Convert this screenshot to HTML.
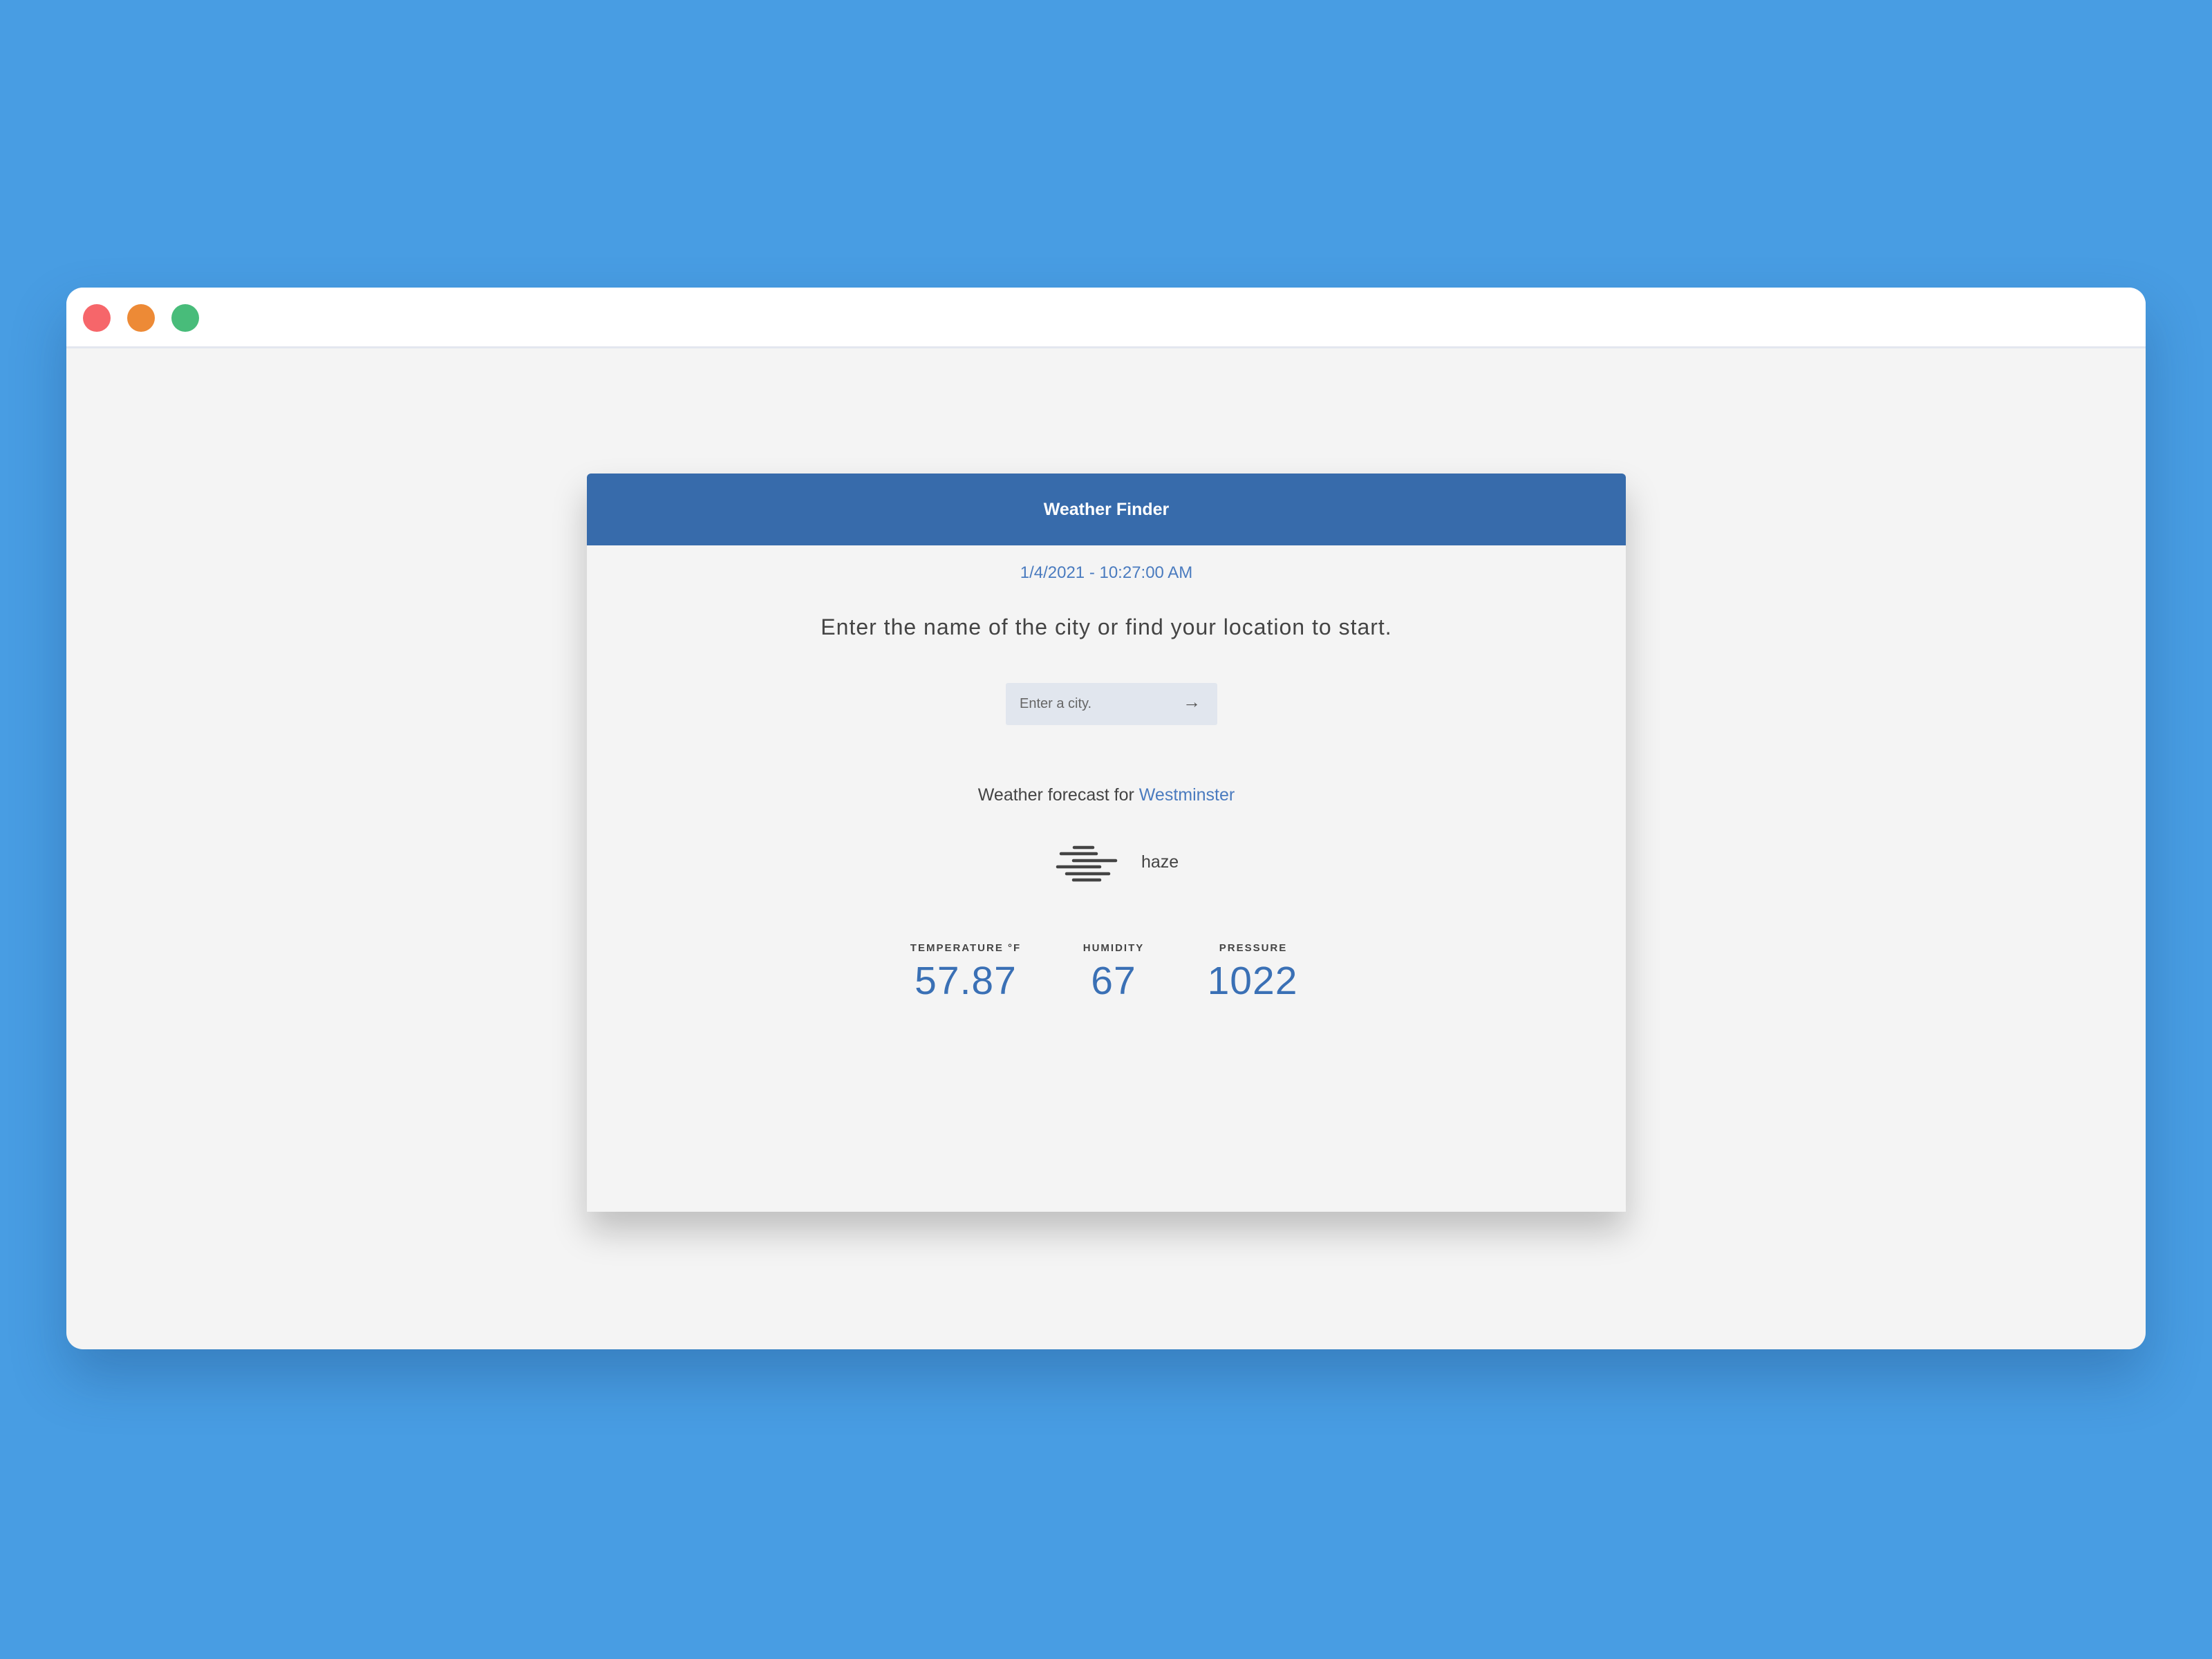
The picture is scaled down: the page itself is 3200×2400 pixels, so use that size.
<!DOCTYPE html>
<html><head><meta charset="utf-8"><style>
*{margin:0;padding:0;box-sizing:border-box}
html,body{width:3200px;height:2400px;overflow:hidden}
body{background:#489de3;font-family:"Liberation Sans",sans-serif;position:relative}
.win{position:absolute;left:96px;top:416px;width:3008px;height:1536px;background:#f4f4f4;border-radius:24px;overflow:hidden;box-shadow:0 40px 80px rgba(20,60,110,.3)}
.bar{position:absolute;left:0;top:0;width:100%;height:88px;background:#fff;border-bottom:3px solid #e3e7ef}
.dot{position:absolute;top:24px;width:40px;height:40px;border-radius:50%}
.card{position:absolute;left:849px;top:685px;width:1503px;height:1068px;background:#f4f4f4;border-radius:6px 6px 0 0;box-shadow:0 28px 50px rgba(0,0,0,.22)}
.hdr{height:104px;background:#376bab;border-radius:6px 6px 0 0;color:#fff;font-size:25px;font-weight:bold;text-align:center;line-height:104px}
.t{position:absolute;left:0;width:100%;text-align:center}
.lab{position:absolute;font-size:15px;font-weight:bold;letter-spacing:2px;color:#444;text-align:center;width:300px}
.num{position:absolute;font-size:57px;color:#3a70b5;text-align:center;width:300px;letter-spacing:1px}
</style></head><body>
<div class="win">
 <div class="bar">
  <div class="dot" style="left:24px;background:#f6666a"></div>
  <div class="dot" style="left:88px;background:#ed8a36"></div>
  <div class="dot" style="left:152px;background:#48bc7a"></div>
 </div>
</div>
<div class="card">
 <div class="hdr">Weather Finder</div>
 <div class="t" style="top:130px;font-size:24px;color:#4a7bbf">1/4/2021 - 10:27:00 AM</div>
 <div class="t" style="top:204px;font-size:32px;color:#444;letter-spacing:1px">Enter the name of the city or find your location to start.</div>
 <div style="position:absolute;left:606px;top:303px;width:306px;height:61px;background:#e1e6ee;border-radius:3px">
  <span style="position:absolute;left:20px;top:19px;font-size:20px;color:#666">Enter a city.</span>
  <span style="position:absolute;left:256px;top:12px;font-size:26px;color:#555">→</span>
 </div>
 <div class="t" style="top:451px;font-size:25px;color:#444">Weather forecast for <span style="color:#4a7bbf">Westminster</span></div>
 <svg style="position:absolute;left:0;top:0" width="1503" height="700" stroke="#444" stroke-width="4.5" stroke-linecap="round">
  <line x1="705" y1="541" x2="732" y2="541"/>
  <line x1="686" y1="550" x2="737" y2="550"/>
  <line x1="704" y1="560" x2="765" y2="560"/>
  <line x1="681" y1="569" x2="742" y2="569"/>
  <line x1="694" y1="579" x2="755" y2="579"/>
  <line x1="704" y1="588" x2="742" y2="588"/>
 </svg>
 <div style="position:absolute;left:802px;top:548px;font-size:25px;color:#444">haze</div>
 <div class="lab" style="left:398px;top:678px">TEMPERATURE °F</div>
 <div class="lab" style="left:612px;top:678px">HUMIDITY</div>
 <div class="lab" style="left:814px;top:678px">PRESSURE</div>
 <div class="num" style="left:398px;top:701px">57.87</div>
 <div class="num" style="left:612px;top:701px">67</div>
 <div class="num" style="left:813px;top:701px">1022</div>
</div>
</body></html>
